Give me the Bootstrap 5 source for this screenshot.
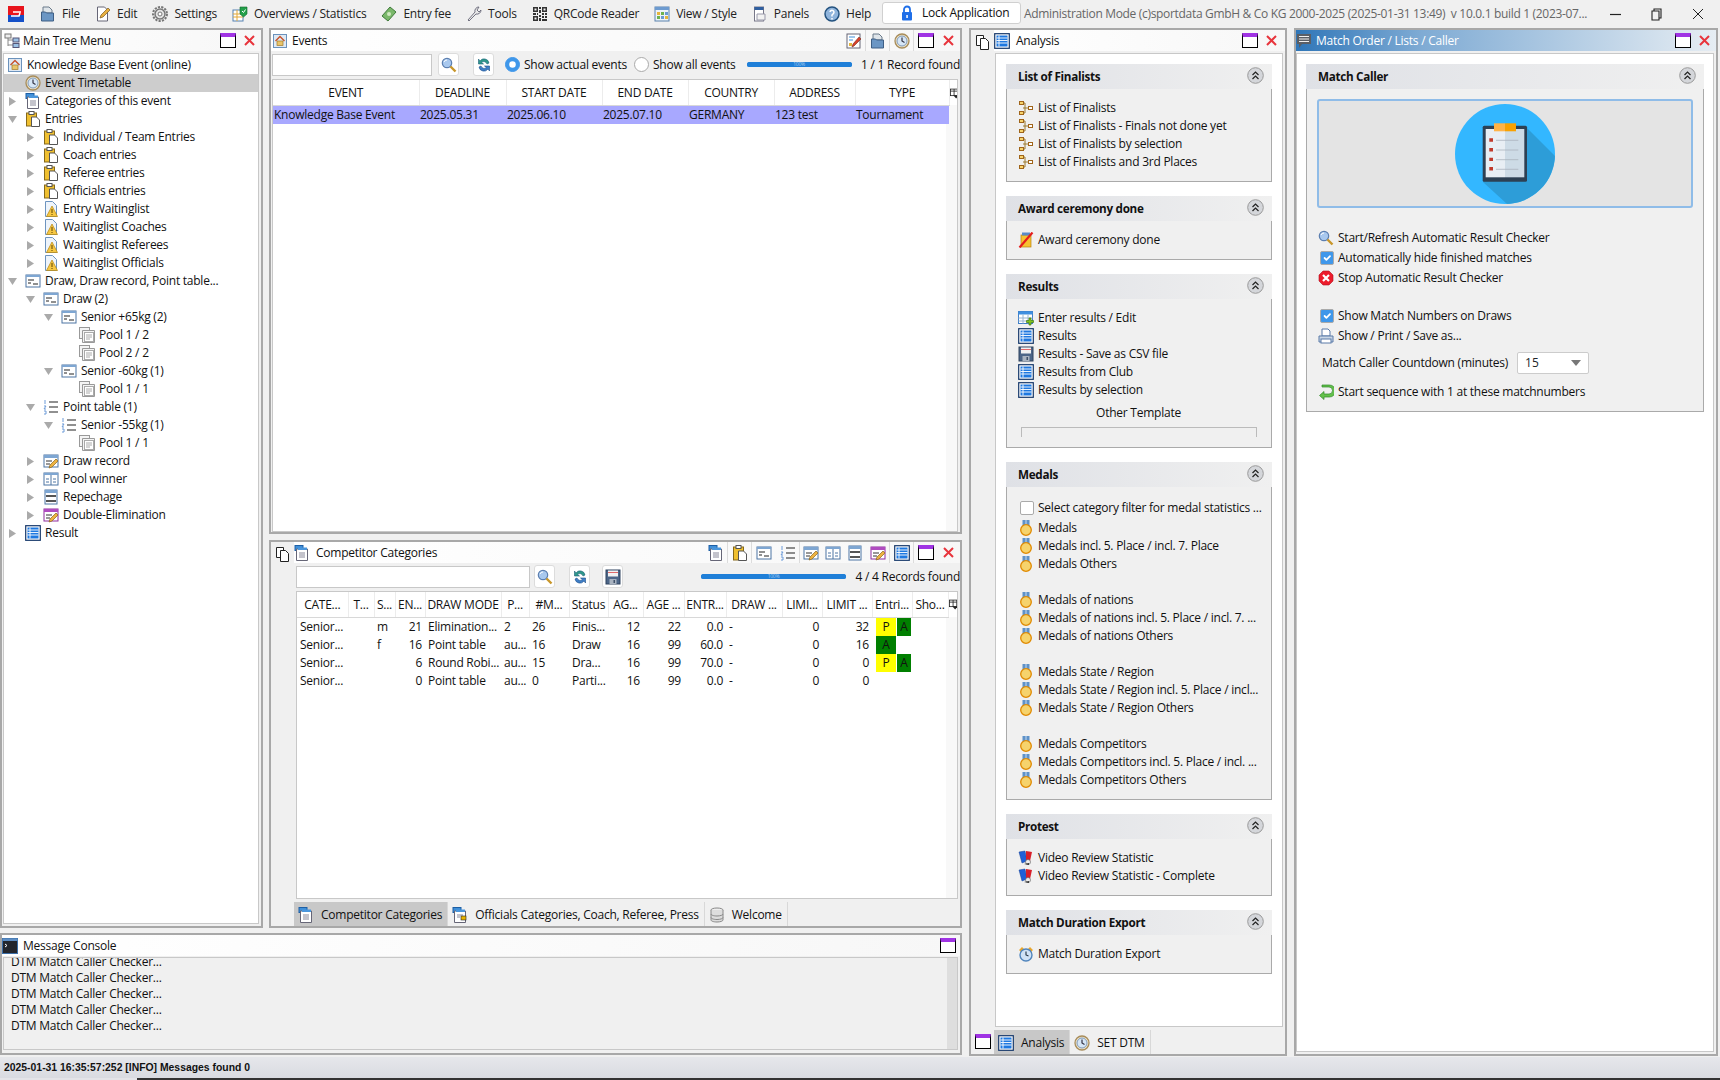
<!DOCTYPE html>
<html lang="en">
<head>
<meta charset="UTF-8">
<title>Event Manager</title>
<link href="https://cdn.jsdelivr.net/npm/bootstrap@5.3.0/dist/css/bootstrap.min.css" rel="stylesheet">
<style>
html, body { height: 100%; }
body { width: 1720px; height: 1080px; overflow: hidden; background: #f0f0f0; color: #111; font: 12px/18px "Open Sans", "Noto Sans", sans-serif; letter-spacing: -.24px; }
.ic { width: 16px; height: 16px; flex: none; display: block; }
/* top bar */
.topbar { height: 28px; padding: 0 0 0 8px; white-space: nowrap; }
.topbar .navbar-nav { flex: none; width: 832px; }
.topbar .navbar-nav .nav-link { display: flex; align-items: center; gap: 6px; padding: 0; margin-right: 15px; color: #222; font-size: 12px; }
.logo { margin-right: 16px; }
.lock { height: 22px; width: 139px; flex: none; margin: 0 3px 3px 10px; padding: 0 0 0 16px; display: flex; align-items: center; gap: 7px; background: #fff; border: 1px solid #d0d0d0; border-radius: 3px; font-size: 12px; line-height: 18px; color: #111; letter-spacing: -.24px; white-space: nowrap; }
.appinfo { color: #666; width: 570px; flex: none; white-space: nowrap; letter-spacing: -.32px; }
.winbtns { gap: 30px; margin-left: 16px; }
/* docks */
.work { height: 1028px; gap: 7px; padding: 0; }
.leftcol { width: 962px; flex: none; }
.toprow { height: 900px; flex: none; gap: 6px; }
.dock { border: 2px solid #a8a8a8; background: #f0f0f0; min-height: 0; flex: none; }
.dock-tree { width: 263px; }
.right-stack { width: 693px; flex: none; }
.dock-events { height: 506px; }
.dock-comp { height: 388px; margin-top: 6px; }
.dock-console { height: 122px; margin-top: 5px; }
.dock-analysis { width: 318px; gap: 0; }
.dock-match { width: 424px; }
.dock-head { height: 21px; flex: none; display: flex; align-items: center; gap: 6px; padding: 0 6px 0 2px; background: linear-gradient(90deg, #fff, #f7f7f7); white-space: nowrap; }
.dock-tree > .dock-head { gap: 3px; }
.dock-console > .dock-head { gap: 5px; padding: 0 4px 0 0; }
.dock-events > .dock-head { gap: 4px; padding-left: 1px; }
.dock-analysis .dock-head { padding-right: 8px; }
.head-blue { background: linear-gradient(90deg, #2f76b8, #7fabd4 30%, #e6edf3); color: #fff; gap: 4px; padding-left: 0; }
.head-tools { margin-left: auto; display: flex; align-items: center; }
.tool { width: 24px; height: 21px; display: flex; align-items: center; justify-content: center; flex: none; }
.tool.n { width: 22px; }
.tool.sep { border-right: 1px solid #dcdcdc; }
.winicon { width: 16px; height: 15px; border: 1.5px solid #000; border-top: 4px solid #a034e4; background: #fff; flex: none; }
.xclose { width: 11px; height: 11px; flex: none; margin-left: 8px; }
.tool + .xclose { margin-left: 5px; }
.gutter { width: 23px; flex: none; padding: 4px 0 5px 4px; }
.box { background: #fff; border: 1px solid #c8c8c8; min-height: 0; }
/* tree */
.tree { margin: 2px 2px 2px 1px; padding-top: 2px; }
.tree-row { height: 18px; display: flex; align-items: center; white-space: nowrap; }
.tree-row .ic { margin-right: 4px; }
.tree-row.on { background: #cdcdcd; }
.tri { width: 17px; flex: none; }
.tri svg { width: 9px; height: 9px; display: block; }
.lv-root { padding-left: 3px; }
.lv0 { padding-left: 4px; }
.lv1 { padding-left: 22px; }
.lv2 { padding-left: 40px; }
.lv3 { padding-left: 58px; }
/* filter rows */
.filter { height: 26px; flex: none; display: flex; align-items: center; padding: 0 0 3px 1px; margin-top: 2px; white-space: nowrap; }
.f-comp { padding-left: 2px; }
.filter .form-control { height: 22px; min-height: 0; padding: 0 3px; border-radius: 0; border-color: #c8c8c8; font-size: 12px; flex: none; }
.q-events { width: 160px; }
.q-comp { width: 234px; }
.tbtn { width: 21px; height: 23px; padding: 0; display: flex; align-items: center; justify-content: center; background: #fff; border: 1px solid #dcdcdc; border-radius: 3px; flex: none; margin-left: 6px; }
.f-comp .q-comp + .tbtn { margin-left: 4px; }
.tbtn.wide-l { margin-left: 14px; }
.tbtn.mid-l { margin-left: 12px; }
.filter .form-check-input { width: 15px; height: 15px; margin: 0 4px 0 0; border-color: #aaa; flex: none; }
.form-check-input:checked { background-color: #3f97ea; border-color: #3f97ea; }
.form-check-input:focus { box-shadow: none; }
.radio-a { margin-left: 11px !important; }
.radio-b { margin-left: 7px !important; }
.progress { height: 5px; border-radius: 3px; background: #1f7fd8; --bs-progress-font-size: 5px; flex: none; }
.pg-events { width: 105px; margin-left: 11px; }
.pg-comp { width: 145px; margin-left: 78px; }
.progress-bar { background: #1f7fd8; color: #a9cdee; line-height: 5px; }
/* grids */
.grid { margin: 0 2px 0 1px; flex: 1; overflow: hidden; background: linear-gradient(to left, #f8f8f8 11px, #fff 11px); }
.grid-comp { margin-left: 2px; }
.grid .table { table-layout: fixed; width: 100%; margin: 0; font-size: 12px; --bs-table-bg: transparent; --bs-table-color: #111; border-color: transparent; }
.grid .table th { height: 25px; padding: 2px 0 0; text-align: center; font-weight: 400; vertical-align: middle; white-space: nowrap; background: #fff; border-right: 1px solid #ececec; border-bottom: 1px solid #d8d8d8; }
.grid-comp .table th { padding-top: 1px; }
.grid .table th:last-child { border-right: 0; border-bottom: 0; }
.grid .table td { height: 18px; padding: 0 0 0 3px; line-height: 18px; white-space: nowrap; overflow: hidden; border: 0; }
.grid .table tr.sel td { background: #a8a8ff; padding-left: 1px; }
.grid .table tr.sel td:last-child { background: transparent; }
.grid .table td.num { text-align: right; padding: 0 3px 0 0; }
.grid .table td.ent { padding: 0 0 0 4px; }
.gear { width: 9px; height: 12px; display: block; }
.flag { display: inline-block; height: 18px; text-align: center; vertical-align: top; }
.flag-p { width: 20px; background: #ffff00; }
.flag-a { width: 20px; background: #007f00; }
.flag-a2 { width: 14px; margin-left: 1px; background: #007f00; }
/* tabs */
.tabs { height: 24px; flex: none; margin-top: 3px; }
.tabs .nav-link { height: 24px; display: flex; align-items: center; gap: 7px; padding: 2px 5px 0 4px; color: #111; font-size: 12px; border-right: 1px solid #d8d8d8; white-space: nowrap; }
.tabs .nav-link.active { background: #c8c8c8; }
/* console */
.console { margin: 1px 2px 3px 1px; height: 94px; background: linear-gradient(to left, #dedede 10px, #f0f0f0 10px); overflow: hidden; padding: 0 0 0 7px; line-height: 16px; }
.console div:first-child { margin-top: -4px; }
/* task groups */
.taskpane { margin: 2px 2px 0 1px; padding: 10px 10px 0; overflow: hidden; }
.taskpane.wide { padding: 10px 9px 0 9px; margin-left: 0; margin-bottom: 2px; }
.card.task { --bs-card-border-radius: 0; --bs-card-inner-border-radius: 0; --bs-card-bg: #f0f0f0; --bs-card-cap-bg: transparent; border: 0; margin-bottom: 14px; }
.task .card-header { height: 25px; padding: 0 8px 2px 12px; display: flex; align-items: center; justify-content: space-between; border: 0; font-weight: 700; font-size: 11.7px; letter-spacing: -.3px; background: linear-gradient(90deg, #dfe1e6, #f0f0f0); }
.collapse-btn { width: 17px; height: 17px; display: block; }
.task .card-body { padding: 10px 0 10px 11px; border: 1px solid #aaa; border-top: 0; }
.item { height: 18px; display: flex; align-items: center; gap: 4px; white-space: nowrap; }
.item .form-check-input { width: 14px; height: 14px; margin: 0 0 0 2px; flex: none; border-color: #aaa; border-radius: 2px; }
.item.first-check { margin: 2px 0; }
.gap18 { height: 18px; }
.tmpl-label { text-align: center; margin: 5px 0 5px -12px; }
.tmpl-box { height: 10px; margin: 0 14px 0 3px; border: 1px solid #bbb; border-bottom: 0; }
.shot { height: 109px; margin: 0 10px 20px -1px; background: #e4e4e4; border: 2px solid #8fbce8; border-radius: 3px; display: flex; justify-content: center; align-items: center; }
.shot svg { width: 100px; height: 100px; }
.matchbody.card-body { padding-bottom: 9px; }
.matchbody .item { height: 20px; }
.countdown { height: 22px; margin: 6px 0 8px 4px; gap: 9px; }
.countdown .form-select { width: 72px; height: 22px; min-height: 0; padding: 0 0 0 7px; font-size: 12px; border-radius: 2px; border-color: #ccc; background-size: 10px; background-position: right 7px center; background-image: url("data:image/svg+xml,%3Csvg xmlns='http://www.w3.org/2000/svg' viewBox='0 0 10 6'%3E%3Cpath fill='%23777' d='M0 0h10L5 6z'/%3E%3C/svg%3E"); }
.status { height: 21px; background: linear-gradient(#e6e7eb, #d9dbe1); padding-left: 4px; font-size: 10.4px; font-weight: 700; line-height: 22px; margin-top: 1px; font-family: "Liberation Sans", sans-serif; letter-spacing: 0; }
.taskbar { height: 2px; background: linear-gradient(90deg, #e4e4e8 137px, #333 137px); }
</style>
</head>
<body>
<svg width="0" height="0" class="d-none">
  <defs>
  <symbol id="tri-r" viewBox="0 0 9 9"><path d="M1 0l7 4.500L1 9z" fill="#aaa"/></symbol>
  <symbol id="tri-d" viewBox="0 0 9 9"><path d="M0 1h9L4.500 8z" fill="#aaa"/></symbol>
  <symbol id="x" viewBox="0 0 11 11"><path d="M1 1l9 9M10 1l-9 9" stroke="#e8343c" stroke-width="2"/></symbol>
  <symbol id="chev" viewBox="0 0 17 17"><circle cx="8.500" cy="8.500" r="7.800" fill="#d4d6da" stroke="#9a9a9a"/><path d="M5.500 8L8.500 5l3 3M5.500 12L8.500 9l3 3" fill="none" stroke="#222" stroke-width="1.200"/></symbol>
  <symbol id="grid-opt" viewBox="0 0 11 13"><rect x="0.500" y="0.500" width="9" height="8" fill="#fff" stroke="#222"/><path d="M0.500 3h9M5 .5v8" stroke="#222"/><path d="M4 8h7l-3.500 4z" fill="#222"/></symbol>
  <symbol id="logo" viewBox="0 0 16 16"><rect width="16" height="9" fill="#e8141c"/><rect y="9" width="16" height="7" fill="#1550c8"/><path d="M5 6h8M12 7l-1 3H3" fill="none" stroke="#fff" stroke-width="1.500"/></symbol>
  <symbol id="file" viewBox="0 0 16 16"><path d="M3 1h6l3 3v3H3z" fill="#dfe5ea" stroke="#6a7a8a"/><path d="M1.500 6h4l1 1h7v8h-12z" fill="#6b96c4" stroke="#3f5f85"/></symbol>
  <symbol id="edit" viewBox="0 0 16 16"><path d="M2.500 1h7l3 3v11h-10z" fill="#fff" stroke="#667"/><path d="M5 12l1-3 7-7 2 2-7 7z" fill="#e8b040" stroke="#7a5a20" stroke-width=".7"/></symbol>
  <symbol id="gear" viewBox="0 0 16 16"><circle cx="8" cy="8" r="5" fill="#e4e4e4" stroke="#777" stroke-width="1.500"/><circle cx="8" cy="8" r="7" fill="none" stroke="#777" stroke-width="2" stroke-dasharray="2.200 1.200"/><circle cx="8" cy="8" r="2" fill="#fff" stroke="#777"/></symbol>
  <symbol id="overview" viewBox="0 0 16 16"><rect x="1" y="4" width="10" height="11" fill="#fff" stroke="#5580b0"/><path d="M1 8h10M1 11h10M5 4v11" stroke="#e2a838"/><path d="M8 1h7v7l-3.500 3L8 8z" fill="#23a04a" stroke="#106a2a" stroke-width=".6"/><path d="M10 5l1.500 1.500L13.500 3.500" stroke="#fff" fill="none"/></symbol>
  <symbol id="formedit" viewBox="0 0 16 16"><rect x="1" y="1" width="13" height="14" fill="#fff" stroke="#667"/><path d="M3 4h6M3 7h4" stroke="#3f8fd8"/><rect x="3" y="10" width="3" height="3" fill="#e6b53c"/><path d="M6 14l1-3 6-7 2 2-7 7z" fill="#d8402a" stroke="#7a2a1c" stroke-width=".6"/></symbol>
  <symbol id="money" viewBox="0 0 16 16"><path d="M1 10L9 1l6 5-8 9z" fill="#7ab86a" stroke="#3f7a3a"/><circle cx="8" cy="8" r="2" fill="#cfe8c0"/></symbol>
  <symbol id="wrench" viewBox="0 0 16 16"><path d="M2 14l7-8a4 4 0 0 1 4-5l-2 3 2 2 2-2a4 4 0 0 1-5 4l-7 7z" fill="#e8e8e8" stroke="#667" stroke-width=".9"/></symbol>
  <symbol id="qr" viewBox="0 0 16 16"><path d="M1 1h5v5H1zM2.500 2.500v2h2v-2zM10 1h5v5h-5zM11.500 2.500v2h2v-2zM1 10h5v5H1zM2.500 11.500v2h2v-2zM7 1h2v2H7zM7 4h2v3H7zM1 7h3v2H1zM5 7h1v2H5zM10 7h2v2h-2zM13 7h2v2h-2zM7 9h2v2H7zM10 10h2v2h-2zM13 10h2v2h-2zM7 12h2v3H7zM10 13h5v2h-5z" fill="#333" fill-rule="evenodd"/></symbol>
  <symbol id="view" viewBox="0 0 16 16"><rect x="1" y="1" width="14" height="14" fill="#eef3f8" stroke="#5a82ad"/><rect x="1" y="1" width="14" height="3" fill="#6d9bd0"/><rect x="3" y="6" width="3" height="3" fill="#e6b53c"/><rect x="7" y="6" width="3" height="3" fill="#6fb24e"/><rect x="11" y="6" width="3" height="3" fill="#6d9bd0"/><rect x="3" y="10" width="3" height="3" fill="#6fb24e"/><rect x="7" y="10" width="3" height="3" fill="#6d9bd0"/><rect x="11" y="10" width="3" height="3" fill="#e6b53c"/></symbol>
  <symbol id="panels" viewBox="0 0 16 16"><rect x="2.500" y="1" width="9" height="14" fill="#fff" stroke="#778"/><rect x="2.500" y="1" width="9" height="3" fill="#2f5fa0"/><path d="M5 8h8v6H5z" fill="#f2f2f2" stroke="#99a"/></symbol>
  <symbol id="help" viewBox="0 0 16 16"><circle cx="8" cy="8" r="7" fill="#8fb4dc" stroke="#23527f" stroke-width="1.500"/><path d="M6 6a2 2 0 1 1 3 2l-1 1v1.500M8 12v1.500" fill="none" stroke="#fff" stroke-width="1.500"/></symbol>
  <symbol id="lock" viewBox="0 0 16 16"><path d="M5 8V4.500a3 3 0 0 1 6 0V8" fill="none" stroke="#1f6fe8" stroke-width="1.800"/><rect x="3" y="7" width="10" height="8.500" rx="1" fill="#1f6fe8"/><rect x="7.300" y="10" width="1.500" height="3" fill="#fff"/></symbol>
  <symbol id="tree" viewBox="0 0 16 16"><path d="M4 3v10M4 7h5M4 12h5" stroke="#888" fill="none"/><rect x="1" y="1" width="6" height="4" fill="#eee" stroke="#777"/><rect x="9" y="5" width="6" height="4" fill="#9bc0e4" stroke="#557"/><rect x="9" y="10.500" width="6" height="4" fill="#9bc0e4" stroke="#557"/></symbol>
  <symbol id="home" viewBox="0 0 16 16"><rect x="1.500" y="1.500" width="13" height="13" fill="#dfe9f4" stroke="#6b92bc"/><path d="M3.500 8L8 3.500 12.500 8" fill="none" stroke="#c8502a" stroke-width="1.400"/><rect x="5" y="8" width="6" height="4.500" fill="#e9c56a" stroke="#a07a2a" stroke-width=".7"/></symbol>
  <symbol id="clock" viewBox="0 0 16 16"><circle cx="8" cy="8" r="7" fill="#eee2c8" stroke="#a78c5a" stroke-width="1.300"/><circle cx="8" cy="8" r="5" fill="#d6e6f6" stroke="#7f9bbb"/><path d="M8 4.500V8l2.500 1.500" fill="none" stroke="#334" stroke-width="1.200"/></symbol>
  <symbol id="cats" viewBox="0 0 16 16"><rect x="1" y="0.500" width="8" height="5" fill="#3f8fd8" stroke="#1d5fa5"/><path d="M2.500 4h11v11.500h-11z" fill="#fff" stroke="#667"/><path d="M5 8h6M5 10h6M5 12h6" stroke="#889"/><rect x="4" y="2.500" width="9" height="2.500" fill="#4a96dc"/></symbol>
  <symbol id="cats2" viewBox="0 0 16 16"><rect x="1" y="0.500" width="8" height="5" fill="#3f8fd8" stroke="#1d5fa5"/><path d="M2.500 4h11v11.500h-11z" fill="#fff" stroke="#667"/><path d="M5 8h6M5 10h3" stroke="#889"/><rect x="4" y="2.500" width="9" height="2.500" fill="#4a96dc"/><rect x="9" y="9" width="5" height="4" fill="#e8b400" stroke="#222" stroke-width=".6"/></symbol>
  <symbol id="clip" viewBox="0 0 16 16"><rect x="1.500" y="2" width="10" height="13" fill="#f0c030" stroke="#85691c"/><rect x="4" y="0.500" width="5" height="3" fill="#fff" stroke="#555"/><path d="M6.500 6h5l3 3v6.500h-8z" fill="#fff" stroke="#555"/></symbol>
  <symbol id="warn" viewBox="0 0 16 16"><path d="M2.500 0.500h7l4 4v11h-11z" fill="#eef4fb" stroke="#6d94c0"/><path d="M9 5l5.500 10.500h-11z" fill="#f6c743" stroke="#b58510" stroke-width=".7"/><path d="M9 8v4M9 13v1" stroke="#5a4300"/></symbol>
  <symbol id="draw" viewBox="0 0 16 16"><rect x="1" y="2" width="14" height="12" fill="#fff" stroke="#4d74a3"/><rect x="1" y="2" width="14" height="2" fill="#7ea6d2"/><path d="M3 7h6M8 11h5M3 10h3" stroke="#222" stroke-width="1.200"/></symbol>
  <symbol id="pool" viewBox="0 0 16 16"><rect x="0.500" y="0.500" width="10" height="11" fill="#f4f4f4" stroke="#999"/><path d="M3.500 3.500h12v12h-12z" fill="#f4f4f4" stroke="#999"/><rect x="5.500" y="5.500" width="9" height="9" fill="#fff" stroke="#aaa"/><path d="M7 8h6M7 10h6M7 12h4" stroke="#aaa"/></symbol>
  <symbol id="points" viewBox="0 0 16 16"><path d="M6 3h9M6 8h9M6 13h9" stroke="#222" stroke-width="1.200"/><path d="M2 1v4M1 7h2l-2 3h2M1 12h2v3H1" fill="none" stroke="#6d9bd8"/></symbol>
  <symbol id="record" viewBox="0 0 16 16"><rect x="1" y="2" width="14" height="12" fill="#fff" stroke="#4d74a3"/><rect x="1" y="2" width="14" height="3" fill="#7ea6d2"/><path d="M3 8h6M3 11h4" stroke="#333"/><path d="M6 15l1-3 6-6 2 2-6 6z" fill="#eeb341" stroke="#8a651c" stroke-width=".7"/></symbol>
  <symbol id="double" viewBox="0 0 16 16"><rect x="1" y="2" width="14" height="12" fill="#fff" stroke="#8d2d9d"/><rect x="1" y="2" width="14" height="3" fill="#b04cc0"/><path d="M3 8h6M3 11h4" stroke="#333"/><path d="M6 15l1-3 6-6 2 2-6 6z" fill="#eeb341" stroke="#8a651c" stroke-width=".7"/></symbol>
  <symbol id="winner" viewBox="0 0 16 16"><rect x="1" y="2" width="14" height="12" fill="#fff" stroke="#4d74a3"/><rect x="1" y="2" width="14" height="2" fill="#7ea6d2"/><path d="M8 4v10M3 8h3M3 11h3M10 8h3M10 11h3" stroke="#4d74a3"/></symbol>
  <symbol id="repe" viewBox="0 0 16 16"><rect x="2" y="1" width="12" height="14" fill="#fff" stroke="#4d74a3"/><rect x="2" y="1" width="12" height="3" fill="#7ea6d2"/><rect x="3" y="6" width="10" height="2" fill="#555"/><rect x="3" y="11" width="10" height="2" fill="#555"/></symbol>
  <symbol id="result" viewBox="0 0 16 16"><rect x="0.700" y="0.700" width="14.600" height="14.600" fill="#fff" stroke="#16386a" stroke-width="1.200"/><rect x="2.500" y="2.500" width="11" height="11" fill="#1e78e0"/><path d="M2.500 5h11M2.500 7.500h11M2.500 10h11M5 2.500v11" stroke="#fff" stroke-width=".9"/></symbol>
  <symbol id="search" viewBox="0 0 16 16"><circle cx="6" cy="6" r="4.700" fill="#a8c8ee" stroke="#5c7fb0" stroke-width="1.200"/><path d="M3 5a3 3 0 0 1 3-2" stroke="#fff" fill="none"/><path d="M9.500 9.500l5 5" stroke="#c8962a" stroke-width="2.400"/></symbol>
  <symbol id="sync" viewBox="0 0 16 16"><path d="M13 6A5 5 0 0 0 4 4L2.500 2v5h5L5.500 5.300A3.500 3.500 0 0 1 11 7z" fill="#2f9a8a" stroke="#1d5f7a" stroke-width=".6"/><path d="M3 10a5 5 0 0 0 9 2l1.500 2V9h-5l2 1.700A3.500 3.500 0 0 1 5 9z" fill="#3f7fc8" stroke="#1d4f8a" stroke-width=".6"/></symbol>
  <symbol id="save" viewBox="0 0 16 16"><rect x="1" y="1" width="14" height="14" fill="#4d6688" stroke="#2f435e"/><rect x="3" y="1.500" width="10" height="6" fill="#f2f2f2"/><rect x="3" y="3" width="10" height="1" fill="#e06a6a"/><rect x="4.500" y="10" width="7" height="5" fill="#a9b3c0"/><rect x="8.500" y="11" width="1.500" height="3" fill="#3f5068"/></symbol>
  <symbol id="copy" viewBox="0 0 16 16"><path d="M1.500 1.500h7v10h-7z" fill="#fff" stroke="#222"/><path d="M5.500 4.500h5l3 3v8h-8z" fill="#fff" stroke="#222"/></symbol>
  <symbol id="chat" viewBox="0 0 16 16"><path d="M1 1h14v10H6l-3 4v-4H1z" fill="#5a5f66"/><path d="M3 3.500h10M3 6h10M3 8.500h10" stroke="#f0f0f0"/></symbol>
  <symbol id="term" viewBox="0 0 16 16"><rect x="0.500" y="0.500" width="15" height="15" fill="#23262d" stroke="#3b6ea8"/><rect x="0.500" y="0.500" width="15" height="2.500" fill="#5c8dc4"/><path d="M3 6l2 1.500L3 9" stroke="#fff" fill="none"/></symbol>
  <symbol id="welcome" viewBox="0 0 16 16"><ellipse cx="8" cy="3" rx="6" ry="2" fill="#eee" stroke="#888"/><path d="M2 3v10c0 1.100 2.700 2 6 2s6-.9 6-2V3" fill="#ddd" stroke="#888"/><path d="M2 7c0 1.100 2.700 2 6 2s6-.9 6-2M2 10.500c0 1.100 2.700 2 6 2s6-.9 6-2" fill="none" stroke="#888"/></symbol>
  <symbol id="final" viewBox="0 0 16 16"><path d="M5 3h2v5H5M5 13h2V8h3" fill="none" stroke="#9c7a30"/><rect x="1.500" y="1.500" width="4" height="3" fill="#f6d36c" stroke="#a0651a"/><rect x="1.500" y="11.500" width="4" height="3" fill="#f6d36c" stroke="#a0651a"/><rect x="10.500" y="6.500" width="4" height="3" fill="#fff" stroke="#a0651a"/></symbol>
  <symbol id="award" viewBox="0 0 16 16"><rect x="3" y="3" width="10" height="12" fill="#f6c230" stroke="#b88010" stroke-width=".7"/><rect x="4" y="0.500" width="8" height="3" fill="#5a8ac8"/><path d="M1.500 15.500L14.500 0.500" stroke="#e41c1c" stroke-width="2.200"/></symbol>
  <symbol id="addtbl" viewBox="0 0 16 16"><rect x="0.500" y="1.500" width="14" height="12" fill="#fff" stroke="#3f7fc8"/><rect x="0.500" y="1.500" width="14" height="3" fill="#3f8fe0"/><path d="M0.500 8h14M0.500 11h14M5 4.500v9M10 4.500v9" stroke="#99b4d0"/><path d="M11 8h2v2.500h2.500v2H13V15h-2v-2.500H8.500v-2H11z" fill="#7fc41e" stroke="#3f7a10" stroke-width=".7"/></symbol>
  <symbol id="medal" viewBox="0 0 16 16"><rect x="4.500" y="0" width="7" height="6" fill="#5f92c8"/><rect x="7.300" y="0" width="1.400" height="6" fill="#a9c6e4"/><circle cx="8" cy="10" r="5.300" fill="#f6d36c" stroke="#e08a00" stroke-width="1.300"/></symbol>
  <symbol id="card" viewBox="0 0 16 16"><path d="M1 2l6-1 2 10-5 2z" fill="#1f5fd8" stroke="#143f90" stroke-width=".5"/><path d="M8 1l6 1-2 9-4-1z" fill="#d81f2a"/><circle cx="10" cy="12" r="2.500" fill="#eee" stroke="#555" stroke-width=".6"/><path d="M6 14l5-1v2z" fill="#333"/></symbol>
  <symbol id="alarm" viewBox="0 0 16 16"><path d="M1 4l3-3 2 2-3 3zM15 4l-3-3-2 2 3 3z" fill="#e8a62c"/><circle cx="8" cy="9" r="6" fill="#cfe2f6" stroke="#4f84bc" stroke-width="1.400"/><path d="M8 5.500V9l2.500 1" fill="none" stroke="#234" stroke-width="1.100"/></symbol>
  <symbol id="err" viewBox="0 0 16 16"><path d="M5 1h6l4 4v6l-4 4H5l-4-4V5z" fill="#ec1c2c" stroke="#b01020" stroke-width=".6"/><path d="M5 5l6 6M11 5l-6 6" stroke="#fff" stroke-width="2.200"/></symbol>
  <symbol id="print" viewBox="0 0 16 16"><path d="M4 1h6l2 2v5H4z" fill="#fff" stroke="#5a7aa8"/><path d="M1 8h14v6H1z" fill="#c9d6e6" stroke="#5a7aa8"/><rect x="3" y="11" width="10" height="4" fill="#fff" stroke="#5a7aa8"/></symbol>
  <symbol id="back" viewBox="0 0 16 16"><path d="M4 3h7a3.500 3.500 0 0 1 0 7H6V7.500L1.500 11.500 6 15.500V13h5.500a6 6 0 0 0 0-12H4z" fill="#63c04a" stroke="#2f8a2a" stroke-width=".7"/></symbol>
  </defs>
</svg>

<nav class="navbar navbar-expand flex-nowrap justify-content-start topbar">
  <svg class="ic logo"><use href="#logo"/></svg>
  <ul class="navbar-nav flex-row">
    <li class="nav-item"><a class="nav-link" href="#"><svg class="ic"><use href="#file"/></svg>File</a></li>
    <li class="nav-item"><a class="nav-link" href="#"><svg class="ic"><use href="#edit"/></svg>Edit</a></li>
    <li class="nav-item"><a class="nav-link" href="#"><svg class="ic"><use href="#gear"/></svg>Settings</a></li>
    <li class="nav-item"><a class="nav-link" href="#"><svg class="ic"><use href="#overview"/></svg>Overviews / Statistics</a></li>
    <li class="nav-item"><a class="nav-link" href="#"><svg class="ic"><use href="#money"/></svg>Entry fee</a></li>
    <li class="nav-item"><a class="nav-link" href="#"><svg class="ic"><use href="#wrench"/></svg>Tools</a></li>
    <li class="nav-item"><a class="nav-link" href="#"><svg class="ic"><use href="#qr"/></svg>QRCode Reader</a></li>
    <li class="nav-item"><a class="nav-link" href="#"><svg class="ic"><use href="#view"/></svg>View / Style</a></li>
    <li class="nav-item"><a class="nav-link" href="#"><svg class="ic"><use href="#panels"/></svg>Panels</a></li>
    <li class="nav-item"><a class="nav-link" href="#"><svg class="ic"><use href="#help"/></svg>Help</a></li>
  </ul>
  <button class="btn lock" type="button"><svg class="ic"><use href="#lock"/></svg>Lock Application</button>
  <div class="appinfo">Administration Mode (c)sportdata GmbH &amp; Co KG 2000-2025 (2025-01-31 13:49) &nbsp;v 10.0.1 build 1 (2023-07...</div>
  <div class="d-flex align-items-center winbtns">
    <svg width="11" height="11" viewBox="0 0 11 11"><path d="M0 5.500h11" stroke="#222" stroke-width="1.200"/></svg>
    <svg width="11" height="13" viewBox="0 0 11 13"><path d="M3 3V1h7v9H8M1 3h7v9H1z" fill="none" stroke="#222" stroke-width="1.100"/></svg>
    <svg width="12" height="12" viewBox="0 0 12 12"><path d="M1 1l10 10M11 1L1 11" stroke="#222"/></svg>
  </div>
</nav>

<div class="d-flex work">
  <div class="leftcol d-flex flex-column">
    <div class="d-flex toprow">
      <section class="dock dock-tree d-flex flex-column">
        <div class="dock-head"><svg class="ic"><use href="#tree"/></svg>Main Tree Menu
          <div class="head-tools"><div class="winicon"></div><svg class="xclose"><use href="#x"/></svg></div>
        </div>
        <div class="box tree flex-grow-1">
          <div class="tree-row lv-root"><svg class="ic"><use href="#home"/></svg>Knowledge Base Event (online)</div>
          <div class="tree-row lv0 on"><span class="tri"></span><svg class="ic"><use href="#clock"/></svg>Event Timetable</div>
          <div class="tree-row lv0"><span class="tri"><svg><use href="#tri-r"/></svg></span><svg class="ic"><use href="#cats"/></svg>Categories of this event</div>
          <div class="tree-row lv0"><span class="tri"><svg><use href="#tri-d"/></svg></span><svg class="ic"><use href="#clip"/></svg>Entries</div>
          <div class="tree-row lv1"><span class="tri"><svg><use href="#tri-r"/></svg></span><svg class="ic"><use href="#clip"/></svg>Individual / Team Entries</div>
          <div class="tree-row lv1"><span class="tri"><svg><use href="#tri-r"/></svg></span><svg class="ic"><use href="#clip"/></svg>Coach entries</div>
          <div class="tree-row lv1"><span class="tri"><svg><use href="#tri-r"/></svg></span><svg class="ic"><use href="#clip"/></svg>Referee entries</div>
          <div class="tree-row lv1"><span class="tri"><svg><use href="#tri-r"/></svg></span><svg class="ic"><use href="#clip"/></svg>Officials entries</div>
          <div class="tree-row lv1"><span class="tri"><svg><use href="#tri-r"/></svg></span><svg class="ic"><use href="#warn"/></svg>Entry Waitinglist</div>
          <div class="tree-row lv1"><span class="tri"><svg><use href="#tri-r"/></svg></span><svg class="ic"><use href="#warn"/></svg>Waitinglist Coaches</div>
          <div class="tree-row lv1"><span class="tri"><svg><use href="#tri-r"/></svg></span><svg class="ic"><use href="#warn"/></svg>Waitinglist Referees</div>
          <div class="tree-row lv1"><span class="tri"><svg><use href="#tri-r"/></svg></span><svg class="ic"><use href="#warn"/></svg>Waitinglist Officials</div>
          <div class="tree-row lv0"><span class="tri"><svg><use href="#tri-d"/></svg></span><svg class="ic"><use href="#draw"/></svg>Draw, Draw record, Point table...</div>
          <div class="tree-row lv1"><span class="tri"><svg><use href="#tri-d"/></svg></span><svg class="ic"><use href="#draw"/></svg>Draw (2)</div>
          <div class="tree-row lv2"><span class="tri"><svg><use href="#tri-d"/></svg></span><svg class="ic"><use href="#draw"/></svg>Senior +65kg (2)</div>
          <div class="tree-row lv3"><span class="tri"></span><svg class="ic"><use href="#pool"/></svg>Pool 1 / 2</div>
          <div class="tree-row lv3"><span class="tri"></span><svg class="ic"><use href="#pool"/></svg>Pool 2 / 2</div>
          <div class="tree-row lv2"><span class="tri"><svg><use href="#tri-d"/></svg></span><svg class="ic"><use href="#draw"/></svg>Senior -60kg (1)</div>
          <div class="tree-row lv3"><span class="tri"></span><svg class="ic"><use href="#pool"/></svg>Pool 1 / 1</div>
          <div class="tree-row lv1"><span class="tri"><svg><use href="#tri-d"/></svg></span><svg class="ic"><use href="#points"/></svg>Point table (1)</div>
          <div class="tree-row lv2"><span class="tri"><svg><use href="#tri-d"/></svg></span><svg class="ic"><use href="#points"/></svg>Senior -55kg (1)</div>
          <div class="tree-row lv3"><span class="tri"></span><svg class="ic"><use href="#pool"/></svg>Pool 1 / 1</div>
          <div class="tree-row lv1"><span class="tri"><svg><use href="#tri-r"/></svg></span><svg class="ic"><use href="#record"/></svg>Draw record</div>
          <div class="tree-row lv1"><span class="tri"><svg><use href="#tri-r"/></svg></span><svg class="ic"><use href="#winner"/></svg>Pool winner</div>
          <div class="tree-row lv1"><span class="tri"><svg><use href="#tri-r"/></svg></span><svg class="ic"><use href="#repe"/></svg>Repechage</div>
          <div class="tree-row lv1"><span class="tri"><svg><use href="#tri-r"/></svg></span><svg class="ic"><use href="#double"/></svg>Double-Elimination</div>
          <div class="tree-row lv0"><span class="tri"><svg><use href="#tri-r"/></svg></span><svg class="ic"><use href="#result"/></svg>Result</div>
        </div>
      </section>

      <div class="right-stack d-flex flex-column">
        <section class="dock dock-events d-flex flex-column">
          <div class="dock-head"><svg class="ic"><use href="#home"/></svg>Events
            <div class="head-tools"><span class="tool sep"><svg class="ic"><use href="#formedit"/></svg></span><span class="tool sep"><svg class="ic"><use href="#file"/></svg></span><span class="tool sep"><svg class="ic"><use href="#clock"/></svg></span><span class="tool"><span class="winicon"></span></span><svg class="xclose"><use href="#x"/></svg></div>
          </div>
          <div class="filter">
            <input class="form-control q-events" type="text" aria-label="Search events">
            <button class="tbtn" type="button"><svg class="ic"><use href="#search"/></svg></button>
            <button class="tbtn wide-l" type="button"><svg class="ic"><use href="#sync"/></svg></button>
            <input class="form-check-input radio-a" type="radio" name="evscope" checked aria-label="Show actual events">Show actual events
            <input class="form-check-input radio-b" type="radio" name="evscope" aria-label="Show all events">Show all events
            <div class="progress pg-events"><div class="progress-bar" style="width:100%">100%</div></div>
            <span class="ms-auto">1 / 1 Record found</span>
          </div>
          <div class="box grid">
            <table class="table">
              <colgroup><col width="146"><col width="87"><col width="96"><col width="86"><col width="86"><col width="81"><col width="94"><col></colgroup>
              <thead><tr><th>EVENT</th><th>DEADLINE</th><th>START DATE</th><th>END DATE</th><th>COUNTRY</th><th>ADDRESS</th><th>TYPE</th><th><svg class="gear"><use href="#grid-opt"/></svg></th></tr></thead>
              <tbody><tr class="sel"><td>Knowledge Base Event</td><td>2025.05.31</td><td>2025.06.10</td><td>2025.07.10</td><td>GERMANY</td><td>123 test</td><td>Tournament</td><td></td></tr></tbody>
            </table>
          </div>
        </section>

        <section class="dock dock-comp d-flex">
          <div class="gutter"><svg class="ic"><use href="#copy"/></svg></div>
          <div class="flex-grow-1 d-flex flex-column">
            <div class="dock-head ps-0"><svg class="ic"><use href="#cats"/></svg>Competitor Categories
              <div class="head-tools"><span class="tool sep"><svg class="ic"><use href="#cats"/></svg></span><span class="tool sep"><svg class="ic"><use href="#clip"/></svg></span><span class="tool"><svg class="ic"><use href="#draw"/></svg></span><span class="tool sep"><svg class="ic"><use href="#points"/></svg></span><span class="tool n"><svg class="ic"><use href="#record"/></svg></span><span class="tool n"><svg class="ic"><use href="#winner"/></svg></span><span class="tool n"><svg class="ic"><use href="#repe"/></svg></span><span class="tool sep"><svg class="ic"><use href="#double"/></svg></span><span class="tool sep"><svg class="ic"><use href="#result"/></svg></span><span class="tool"><span class="winicon"></span></span><svg class="xclose"><use href="#x"/></svg></div>
            </div>
            <div class="filter f-comp">
              <input class="form-control q-comp" type="text" aria-label="Search categories">
              <button class="tbtn" type="button"><svg class="ic"><use href="#search"/></svg></button>
              <button class="tbtn wide-l" type="button"><svg class="ic"><use href="#sync"/></svg></button>
              <button class="tbtn mid-l" type="button"><svg class="ic"><use href="#save"/></svg></button>
              <div class="progress pg-comp"><div class="progress-bar" style="width:100%">100%</div></div>
              <span class="ms-auto">4 / 4 Records found</span>
            </div>
            <div class="box grid grid-comp">
              <table class="table">
                <colgroup><col width="51"><col width="26"><col width="21"><col width="30"><col width="76"><col width="28"><col width="40"><col width="39"><col width="35"><col width="41"><col width="42"><col width="56"><col width="40"><col width="50"><col width="40"><col width="36"><col></colgroup>
                <thead><tr><th>CATE...</th><th>T...</th><th>S...</th><th>EN...</th><th>DRAW MODE</th><th>P...</th><th>#M...</th><th>Status</th><th>AG...</th><th>AGE ...</th><th>ENTR...</th><th>DRAW ...</th><th>LIMI...</th><th>LIMIT ...</th><th>Entri...</th><th>Sho...</th><th><svg class="gear"><use href="#grid-opt"/></svg></th></tr></thead>
                <tbody>
                  <tr><td>Senior...</td><td></td><td>m</td><td class="num">21</td><td>Elimination...</td><td>2</td><td>26</td><td>Finis...</td><td class="num">12</td><td class="num">22</td><td class="num">0.0</td><td>-</td><td class="num">0</td><td class="num">32</td><td class="ent"><span class="flag flag-p">P</span><span class="flag flag-a2">A</span></td><td></td><td></td></tr>
                  <tr><td>Senior...</td><td></td><td>f</td><td class="num">16</td><td>Point table</td><td>au...</td><td>16</td><td>Draw</td><td class="num">16</td><td class="num">99</td><td class="num">60.0</td><td>-</td><td class="num">0</td><td class="num">16</td><td class="ent"><span class="flag flag-a">A</span></td><td></td><td></td></tr>
                  <tr><td>Senior...</td><td></td><td></td><td class="num">6</td><td>Round Robi...</td><td>au...</td><td>15</td><td>Dra...</td><td class="num">16</td><td class="num">99</td><td class="num">70.0</td><td>-</td><td class="num">0</td><td class="num">0</td><td class="ent"><span class="flag flag-p">P</span><span class="flag flag-a2">A</span></td><td></td><td></td></tr>
                  <tr><td>Senior...</td><td></td><td></td><td class="num">0</td><td>Point table</td><td>au...</td><td>0</td><td>Parti...</td><td class="num">16</td><td class="num">99</td><td class="num">0.0</td><td>-</td><td class="num">0</td><td class="num">0</td><td></td><td></td><td></td></tr>
                </tbody>
              </table>
            </div>
            <ul class="nav tabs">
              <li class="nav-item"><a class="nav-link active" href="#"><svg class="ic"><use href="#cats"/></svg>Competitor Categories</a></li>
              <li class="nav-item"><a class="nav-link" href="#"><svg class="ic"><use href="#cats2"/></svg>Officials Categories, Coach, Referee, Press</a></li>
              <li class="nav-item"><a class="nav-link" href="#"><svg class="ic"><use href="#welcome"/></svg>Welcome</a></li>
            </ul>
          </div>
        </section>
      </div>
    </div>

    <section class="dock dock-console d-flex flex-column">
      <div class="dock-head"><svg class="ic"><use href="#term"/></svg>Message Console
        <div class="head-tools"><div class="winicon"></div></div>
      </div>
      <div class="box console">
        <div>DTM Match Caller Checker...</div>
        <div>DTM Match Caller Checker...</div>
        <div>DTM Match Caller Checker...</div>
        <div>DTM Match Caller Checker...</div>
        <div>DTM Match Caller Checker...</div>
      </div>
    </section>
  </div>

  <section class="dock dock-analysis d-flex">
    <div class="gutter d-flex flex-column justify-content-between"><svg class="ic"><use href="#copy"/></svg><div class="winicon"></div></div>
    <div class="flex-grow-1 d-flex flex-column">
      <div class="dock-head ps-0"><svg class="ic"><use href="#result"/></svg>Analysis
        <div class="head-tools"><div class="winicon"></div><svg class="xclose"><use href="#x"/></svg></div>
      </div>
      <div class="box taskpane flex-grow-1">
        <div class="card task">
          <div class="card-header">List of Finalists<svg class="collapse-btn"><use href="#chev"/></svg></div>
          <div class="card-body">
            <div class="item"><svg class="ic"><use href="#final"/></svg>List of Finalists</div>
            <div class="item"><svg class="ic"><use href="#final"/></svg>List of Finalists - Finals not done yet</div>
            <div class="item"><svg class="ic"><use href="#final"/></svg>List of Finalists by selection</div>
            <div class="item"><svg class="ic"><use href="#final"/></svg>List of Finalists and 3rd Places</div>
          </div>
        </div>
        <div class="card task">
          <div class="card-header">Award ceremony done<svg class="collapse-btn"><use href="#chev"/></svg></div>
          <div class="card-body"><div class="item"><svg class="ic"><use href="#award"/></svg>Award ceremony done</div></div>
        </div>
        <div class="card task">
          <div class="card-header">Results<svg class="collapse-btn"><use href="#chev"/></svg></div>
          <div class="card-body">
            <div class="item"><svg class="ic"><use href="#addtbl"/></svg>Enter results / Edit</div>
            <div class="item"><svg class="ic"><use href="#result"/></svg>Results</div>
            <div class="item"><svg class="ic"><use href="#save"/></svg>Results - Save as CSV file</div>
            <div class="item"><svg class="ic"><use href="#result"/></svg>Results from Club</div>
            <div class="item"><svg class="ic"><use href="#result"/></svg>Results by selection</div>
            <div class="tmpl-label">Other Template</div>
            <div class="tmpl-box"></div>
          </div>
        </div>
        <div class="card task">
          <div class="card-header">Medals<svg class="collapse-btn"><use href="#chev"/></svg></div>
          <div class="card-body">
            <div class="item first-check"><input class="form-check-input" type="checkbox" aria-label="Select category filter">Select category filter for medal statistics ...</div>
            <div class="item"><svg class="ic"><use href="#medal"/></svg>Medals</div>
            <div class="item"><svg class="ic"><use href="#medal"/></svg>Medals incl. 5. Place / incl. 7. Place</div>
            <div class="item"><svg class="ic"><use href="#medal"/></svg>Medals Others</div>
            <div class="gap18"></div>
            <div class="item"><svg class="ic"><use href="#medal"/></svg>Medals of nations</div>
            <div class="item"><svg class="ic"><use href="#medal"/></svg>Medals of nations incl. 5. Place / incl. 7. ...</div>
            <div class="item"><svg class="ic"><use href="#medal"/></svg>Medals of nations Others</div>
            <div class="gap18"></div>
            <div class="item"><svg class="ic"><use href="#medal"/></svg>Medals State / Region</div>
            <div class="item"><svg class="ic"><use href="#medal"/></svg>Medals State / Region incl. 5. Place / incl...</div>
            <div class="item"><svg class="ic"><use href="#medal"/></svg>Medals State / Region Others</div>
            <div class="gap18"></div>
            <div class="item"><svg class="ic"><use href="#medal"/></svg>Medals Competitors</div>
            <div class="item"><svg class="ic"><use href="#medal"/></svg>Medals Competitors incl. 5. Place / incl. ...</div>
            <div class="item"><svg class="ic"><use href="#medal"/></svg>Medals Competitors Others</div>
          </div>
        </div>
        <div class="card task">
          <div class="card-header">Protest<svg class="collapse-btn"><use href="#chev"/></svg></div>
          <div class="card-body">
            <div class="item"><svg class="ic"><use href="#card"/></svg>Video Review Statistic</div>
            <div class="item"><svg class="ic"><use href="#card"/></svg>Video Review Statistic - Complete</div>
          </div>
        </div>
        <div class="card task">
          <div class="card-header">Match Duration Export<svg class="collapse-btn"><use href="#chev"/></svg></div>
          <div class="card-body"><div class="item"><svg class="ic"><use href="#alarm"/></svg>Match Duration Export</div></div>
        </div>
      </div>
      <ul class="nav tabs">
        <li class="nav-item"><a class="nav-link active" href="#"><svg class="ic"><use href="#result"/></svg>Analysis</a></li>
        <li class="nav-item"><a class="nav-link" href="#"><svg class="ic"><use href="#clock"/></svg>SET DTM</a></li>
      </ul>
    </div>
  </section>

  <section class="dock dock-match d-flex flex-column">
    <div class="dock-head head-blue"><svg class="ic"><use href="#chat"/></svg>Match Order / Lists / Caller
      <div class="head-tools"><div class="winicon"></div><svg class="xclose"><use href="#x"/></svg></div>
    </div>
    <div class="box taskpane wide flex-grow-1">
      <div class="card task">
        <div class="card-header">Match Caller<svg class="collapse-btn"><use href="#chev"/></svg></div>
        <div class="card-body matchbody">
          <div class="shot">
            <svg viewBox="0 0 100 100">
              <clipPath id="disc"><circle cx="50" cy="50" r="50"/></clipPath>
              <circle cx="50" cy="50" r="50" fill="#33b7ff"/>
              <path d="M72 24l28 28v48H52L27.700 77.700z" fill="#2d9dd8" clip-path="url(#disc)"/>
              <rect x="27.700" y="21.700" width="44.300" height="56" rx="1.500" fill="#2d4053"/>
              <rect x="30.700" y="25" width="19.300" height="48.300" fill="#e8eef4"/>
              <rect x="50" y="25" width="19.300" height="48.300" fill="#cddbe6"/>
              <rect x="39" y="19.300" width="11" height="8" fill="#ffb347"/>
              <rect x="50" y="19.300" width="11" height="8" fill="#f9a100"/>
              <path d="M41 36.300h22.300M41 46h22.300M41 55.700h22.300M41 65.300h22.300" stroke="#a9b3bd" stroke-width=".8"/>
              <path d="M34.300 34.300h3.700v3.400h-3.700zM34.300 44h3.700v3.400h-3.700zM34.300 53.700h3.700v3.400h-3.700zM34.300 63h3.700v3.400h-3.700z" fill="#c0392b"/>
            </svg>
          </div>
          <div class="item"><svg class="ic"><use href="#search"/></svg>Start/Refresh Automatic Result Checker</div>
          <div class="item"><input class="form-check-input" type="checkbox" checked aria-label="Automatically hide finished matches">Automatically hide finished matches</div>
          <div class="item"><svg class="ic"><use href="#err"/></svg>Stop Automatic Result Checker</div>
          <div class="gap18"></div>
          <div class="item"><input class="form-check-input" type="checkbox" checked aria-label="Show Match Numbers on Draws">Show Match Numbers on Draws</div>
          <div class="item"><svg class="ic"><use href="#print"/></svg>Show / Print / Save as...</div>
          <div class="d-flex align-items-center countdown">Match Caller Countdown (minutes)
            <select class="form-select" aria-label="Countdown"><option>15</option></select>
          </div>
          <div class="item"><svg class="ic"><use href="#back"/></svg>Start sequence with 1 at these matchnumbers</div>
        </div>
      </div>
    </div>
  </section>
</div>

<div class="status">2025-01-31 16:35:57:252 [INFO] Messages found 0</div>
<div class="taskbar"></div>
<script src="https://cdn.jsdelivr.net/npm/bootstrap@5.3.0/dist/js/bootstrap.bundle.min.js"></script>
</body>
</html>
